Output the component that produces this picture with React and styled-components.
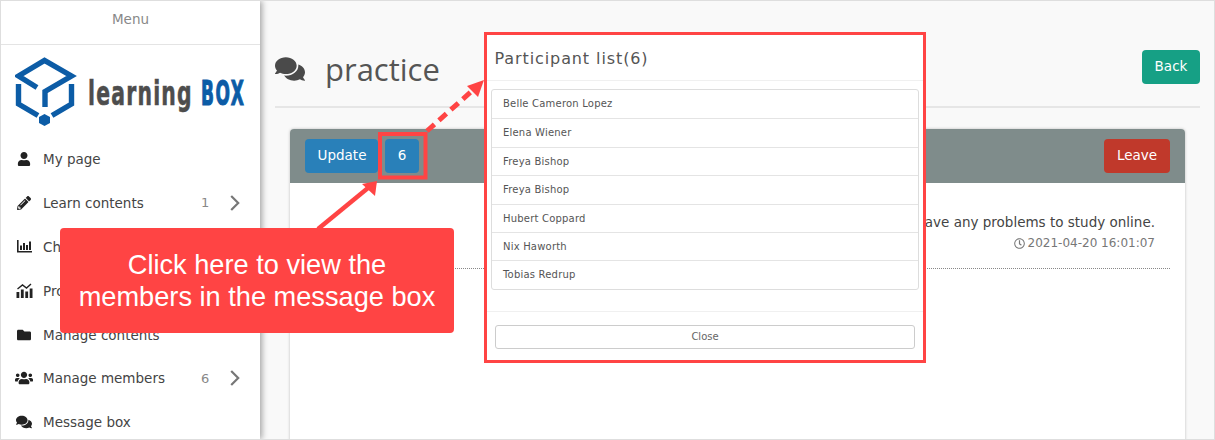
import styled, { createGlobalStyle } from "styled-components";
import {
  FaUser,
  FaPencilAlt,
  FaFolder,
  FaUsers,
  FaComments,
  FaRegClock,
} from "react-icons/fa";

const red = "#ff4444";
const uiFont = `"DejaVu Sans", Verdana, sans-serif`;

const GlobalStyle = createGlobalStyle`
  html, body {
    margin: 0;
    padding: 0;
    height: 440px;
    overflow: hidden;
    background: #f9f9f9;
  }
  * { box-sizing: border-box; }
`;

const Page = styled.div`
  position: relative;
  display: flex;
  width: 1215px;
  height: 440px;
  overflow: hidden;
  border: 1px solid #dedede;
  font-family: ${uiFont};
  color: #444;
`;

const Sidebar = styled.aside`
  flex: 0 0 259px;
  background: #fff;
  box-shadow: 2px 0 6px rgba(0, 0, 0, 0.35);
  z-index: 1;
`;

const MenuTitle = styled.div`
  height: 44px;
  line-height: 37px;
  text-align: center;
  font-size: 13.5px;
  color: #888;
  border-bottom: 1px solid #e4e4e4;
`;

const LogoBox = styled.div`
  height: 92px;
  padding: 11px 0 0 14px;
  svg { display: block; }
`;

const NavList = styled.nav`
  display: flex;
  flex-direction: column;
`;

const NavItem = styled.div`
  display: flex;
  align-items: center;
  height: 43.9px;
  padding-left: 15px;
  font-size: 13.5px;
  color: #444;
`;

const NavIcon = styled.span`
  flex: 0 0 16px;
  min-width: 0;
  margin-right: 11px;
  display: flex;
  align-items: center;
  justify-content: center;
  color: #222;
  font-size: ${(p) => p.$size || 14}px;
  svg { flex: none; }
`;

const NavLabel = styled.span`
  flex: 1;
`;

const NavCount = styled.span`
  width: 29px;
  color: #888;
  font-size: 13px;
`;

const NavArrow = styled.svg`
  margin-right: 20px;
  display: block;
`;

const Main = styled.main`
  flex: 1;
  padding: 0 14px 0 15px;
`;

const TitleRow = styled.div`
  height: 107px;
  padding-top: 47px;
  display: flex;
  justify-content: space-between;
  align-items: flex-start;
  border-bottom: 2px solid #e6e6e6;
`;

const PageTitle = styled.h1`
  margin: 0;
  display: flex;
  align-items: center;
  gap: 20px;
  font-family: "Open Sans", sans-serif;
  font-weight: 400;
  font-size: 31px;
  line-height: 42px;
  color: #555;
  svg { font-size: 30px; color: #4a4a4a; }
`;

const Button = styled.button`
  width: ${(p) => p.$w}px;
  height: 34px;
  padding: 0 0 2px ${(p) => p.$left || 0}px;
  margin-top: ${(p) => p.$top || 0}px;
  border: 0;
  border-radius: 4px;
  color: #fff;
  font-family: ${uiFont};
  font-size: 13.5px;
  background: ${(p) => p.$bg};
`;

const Panel = styled.section`
  margin: 21px 15px 0;
  height: 330px;
  background: #fff;
  border-radius: 4px 4px 0 0;
  box-shadow: 0 0 3px rgba(0, 0, 0, 0.25);
`;

const PanelHeader = styled.div`
  height: 54px;
  padding: 10px 15px;
  display: flex;
  align-items: flex-start;
  gap: 7px;
  background: #7f8c8b;
  border-radius: 4px 4px 0 0;
`;

const Spacer = styled.div`
  flex: 1;
`;

const Message = styled.div`
  margin: 30px 15px 0;
  padding: 0 15px 17px 0;
  text-align: right;
  border-bottom: 1px dotted #888;
`;

const MessageText = styled.div`
  font-size: 13.5px;
  line-height: 18px;
  color: #444;
`;

const MessageDate = styled.div`
  margin-top: 4px;
  display: flex;
  justify-content: flex-end;
  align-items: center;
  gap: 3px;
  font-size: 12px;
  line-height: 16px;
  color: #777;
  svg { font-size: 11px; }
`;

const Callout = styled.div`
  position: absolute;
  left: 59px;
  top: 227px;
  width: 394px;
  height: 105px;
  display: flex;
  align-items: center;
  justify-content: center;
  text-align: center;
  background: ${red};
  border-radius: 4px;
  color: #fff;
  font-family: "Liberation Sans", Arial, sans-serif;
  font-size: 27.2px;
  line-height: 32px;
  z-index: 3;
`;

const Arrows = styled.svg`
  position: absolute;
  left: -1px;
  top: -1px;
  z-index: 2;
`;

const Modal = styled.div`
  position: absolute;
  left: 483px;
  top: 31px;
  width: 442px;
  height: 331px;
  display: flex;
  flex-direction: column;
  background: #fff;
  border: 3px solid ${red};
  z-index: 3;
`;

const ModalHeader = styled.div`
  height: 46px;
  padding: 13px 0 0 7.5px;
  font-size: 16px;
  letter-spacing: 0.9px;
  line-height: 22px;
  color: #555;
  border-bottom: 1px solid #f0f0f0;
`;

const MemberList = styled.ul`
  margin: 8px 4px 0;
  padding: 0;
  list-style: none;
  border: 1px solid #ddd;
  border-radius: 3px;
`;

const Member = styled.li`
  height: 28.4px;
  padding-left: 11px;
  line-height: 27px;
  font-size: 10px;
  letter-spacing: 0.2px;
  color: #555;
  & + & { border-top: 1px solid #e4e4e4; }
`;

const ModalFooter = styled.div`
  margin-top: 21px;
  padding: 13px 8px 0;
  border-top: 1px solid #f0f0f0;
`;

const CloseButton = styled.button`
  display: block;
  width: 100%;
  height: 24px;
  padding: 0;
  background: #fff;
  border: 1px solid #ccc;
  border-radius: 3px;
  font-family: ${uiFont};
  font-size: 10px;
  color: #666;
`;

const ProgressIcon = () => (
  <svg width="17" height="15" viewBox="0 0 17 15" fill="currentColor">
    <rect x="0.5" y="9" width="2.8" height="6" />
    <rect x="4.9" y="6.5" width="2.8" height="8.5" />
    <rect x="9.3" y="8.5" width="2.8" height="6.5" />
    <rect x="13.7" y="5.5" width="2.8" height="9.5" />
    <path d="M1.5 6 L6.5 2 L10.5 5 L15 1" fill="none" stroke="currentColor" strokeWidth="1.4" />
  </svg>
);

const ChartIcon = () => (
  <svg width="15" height="13" viewBox="0 0 15 13" fill="currentColor">
    <path d="M0 0h1.6v11H15v1.6H0z" />
    <rect x="3" y="5.5" width="2" height="4.5" />
    <rect x="6" y="3" width="2" height="7" />
    <rect x="9" y="5" width="2" height="5" />
    <rect x="12" y="1.5" width="2" height="8.5" />
  </svg>
);

const Chevron = () => (
  <NavArrow width="10" height="16" viewBox="0 0 10 16" fill="none" stroke="#777" strokeWidth="2.2">
    <path d="M1.2 1 L8.2 8 L1.2 15" />
  </NavArrow>
);

const Logo = () => (
  <svg width="232" height="72" viewBox="0 0 232 72">
    <g fill="none" stroke="#0c5ca6" strokeWidth="5.4">
      <path d="M22 31.5 L3.5 20 L29.5 4.5 L56.5 20 L30 35.5 V51" />
      <path d="M3.5 28 V48 L23 59.5" />
      <path d="M56.5 28 V48 L37 59.5" />
    </g>
    <path d="M29.5 58 L35 61 V67 L29.5 70 L24 67 V61 Z" fill="#0c5ca6" />
    <text
      transform="translate(73 49) scale(0.6 1)"
      letterSpacing="2"
      fontFamily="DejaVu Sans, sans-serif"
      fontWeight="700"
      fontSize="34"
      fill="#4d4d4d"
      stroke="#4d4d4d"
      strokeWidth="0.6"
    >
      learning
    </text>
    <text
      transform="translate(186 49) scale(0.5 1)"
      letterSpacing="3"
      fontFamily="DejaVu Sans, sans-serif"
      fontWeight="700"
      fontSize="34"
      fill="#0c5ca6"
      stroke="#0c5ca6"
      strokeWidth="1.2"
    >
      BOX
    </text>
  </svg>
);

const menu = [
  { icon: <FaUser />, label: "My page" },
  { icon: <FaPencilAlt />, label: "Learn contents", count: 1 },
  { icon: <ChartIcon />, label: "Check results" },
  { icon: <ProgressIcon />, label: "Progress" },
  { icon: <FaFolder />, label: "Manage contents" },
  { icon: <FaUsers />, size: 18, label: "Manage members", count: 6 },
  { icon: <FaComments />, size: 16, label: "Message box" },
];

const members = [
  "Belle Cameron Lopez",
  "Elena Wiener",
  "Freya Bishop",
  "Freya Bishop",
  "Hubert Coppard",
  "Nix Haworth",
  "Tobias Redrup",
];

const App = () => (
  <Page>
    <GlobalStyle />
    <Sidebar>
      <MenuTitle>Menu</MenuTitle>
      <LogoBox>
        <Logo />
      </LogoBox>
      <NavList>
        {menu.map((item) => (
          <NavItem key={item.label}>
            <NavIcon $size={item.size}>{item.icon}</NavIcon>
            <NavLabel>{item.label}</NavLabel>
            {item.count && <NavCount>{item.count}</NavCount>}
            {item.count && <Chevron />}
          </NavItem>
        ))}
      </NavList>
    </Sidebar>
    <Main>
      <TitleRow>
        <PageTitle>
          <FaComments />
          practice
        </PageTitle>
        <Button $bg="#16a085" $w={58} $top={2}>Back</Button>
      </TitleRow>
      <Panel>
        <PanelHeader>
          <Button $bg="#2980b9" $w={73} $left={1}>Update</Button>
          <Button $bg="#2980b9" $w={34}>6</Button>
          <Spacer />
          <Button $bg="#c0392b" $w={66}>Leave</Button>
        </PanelHeader>
        <Message>
          <MessageText>Please let me know if you have any problems to study online.</MessageText>
          <MessageDate>
            <FaRegClock />
            2021-04-20 16:01:07
          </MessageDate>
        </Message>
      </Panel>
    </Main>
    <Arrows width="1215" height="440" viewBox="0 0 1215 440">
      <rect x="380" y="134" width="45.5" height="43.5" fill="none" stroke={red} strokeWidth="4" />
      <path d="M318 229 L368 188" stroke={red} strokeWidth="4.5" fill="none" />
      <path d="M377 181 L362 184 L375 196 Z" fill={red} />
      <path d="M427 131 L473 90" stroke={red} strokeWidth="5" strokeDasharray="10 6" fill="none" />
      <path d="M484 80 L467 86 L478 97 Z" fill={red} />
    </Arrows>
    <Callout>
      Click here to view the
      <br />
      members in the message box
    </Callout>
    <Modal>
      <ModalHeader>Participant list(6)</ModalHeader>
      <MemberList>
        {members.map((name, i) => (
          <Member key={i}>{name}</Member>
        ))}
      </MemberList>
      <ModalFooter>
        <CloseButton>Close</CloseButton>
      </ModalFooter>
    </Modal>
  </Page>
);

export default App;
